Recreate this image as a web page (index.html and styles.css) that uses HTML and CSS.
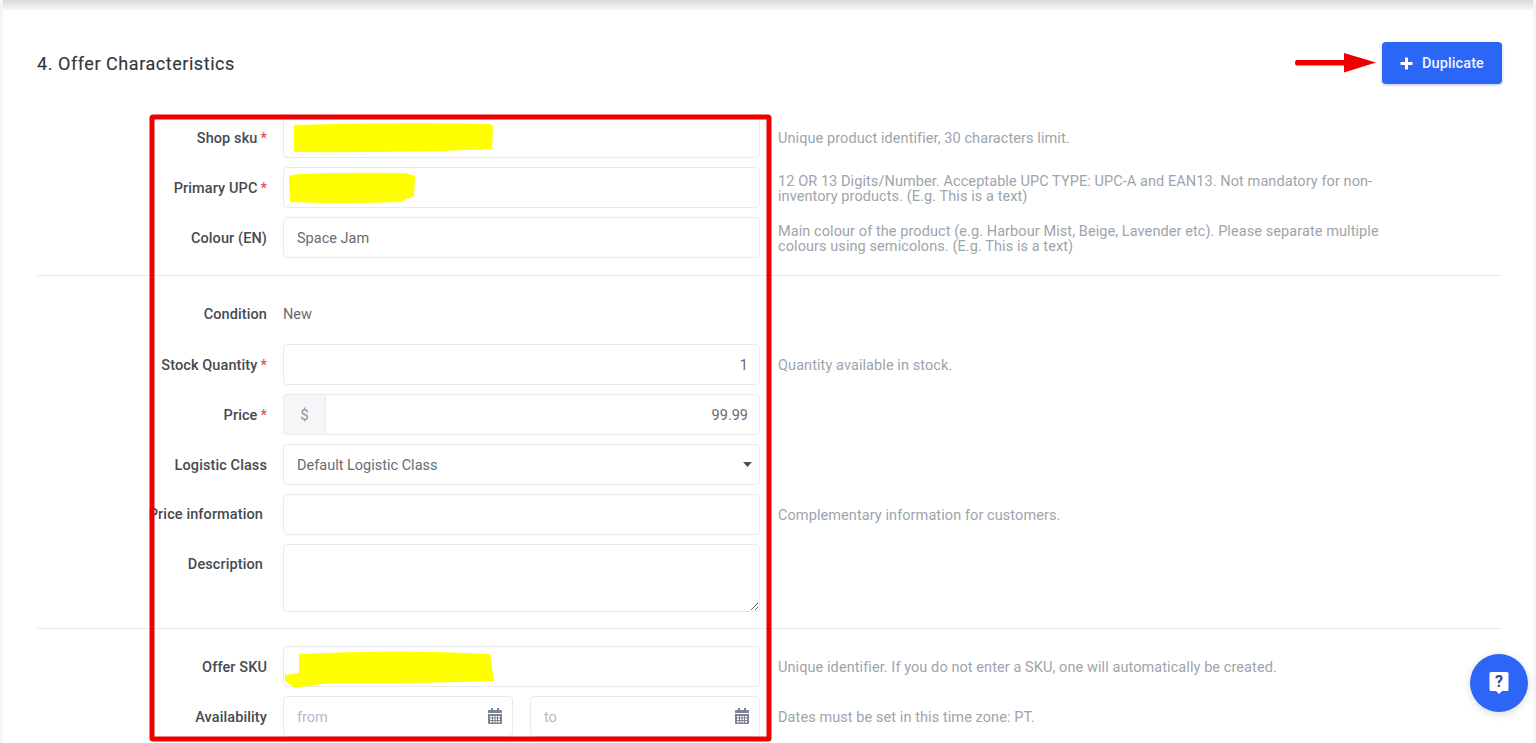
FILE: index.html
```html
<!DOCTYPE html>
<html lang="en">
<head>
<meta charset="utf-8">
<title>Offer Characteristics</title>
<link rel="stylesheet" href="styles.css">
</head>
<body>
<div class="topshade"></div>
<main class="card">
  <header class="head">
    <h2 class="title">4. Offer Characteristics</h2>
    <div class="actions">
      <svg class="arrow" width="83" height="24" viewBox="0 0 83 24"><path d="M2 9 H50 V2 L82 11.500 L50 21.500 V14.500 H2 Q0 12 2 9Z" fill="#ee0000"/></svg>
      <button class="btn" type="button"><svg width="13" height="13" viewBox="0 0 13 13"><path d="M5 0.5h3v4.500h4.500v3h-4.500v4.500h-3v-4.500h-4.500v-3h4.500z" fill="#fff"/></svg>Duplicate</button>
    </div>
  </header>

  <section class="sec first">
    <div class="row"><label class="lbl">Shop sku<i>*</i></label><input class="ctl" type="text"><p class="help">Unique product identifier, 30 characters limit.</p></div>
    <div class="row"><label class="lbl">Primary UPC<i>*</i></label><input class="ctl" type="text"><p class="help">12 OR 13 Digits/Number. Acceptable UPC TYPE: UPC-A and EAN13. Not mandatory for non-<br>inventory products. (E.g. This is a text)</p></div>
    <div class="row"><label class="lbl">Colour (EN)</label><input class="ctl" type="text" value="Space Jam"><p class="help">Main colour of the product (e.g. Harbour Mist, Beige, Lavender etc). Please separate multiple<br>colours using semicolons. (E.g. This is a text)</p></div>
  </section>

  <section class="sec mid">
    <div class="row"><label class="lbl plain">Condition</label><div class="static">New</div><p class="help"></p></div>
    <div class="row"><label class="lbl">Stock Quantity<i>*</i></label><input class="ctl num" type="text" value="1"><p class="help">Quantity available in stock.</p></div>
    <div class="row"><label class="lbl">Price<i>*</i></label><div class="group"><span class="addon">$</span><input class="ctl num" type="text" value="99.99"></div><p class="help"></p></div>
    <div class="row"><label class="lbl">Logistic Class</label><div class="selectwrap"><select class="ctl sel"><option>Default Logistic Class</option></select><svg class="caret" width="9" height="5" viewBox="0 0 10 6" preserveAspectRatio="none"><path d="M0 0h10L5 6z" fill="#4c5157"/></svg></div><p class="help"></p></div>
    <div class="row"><label class="lbl opt">Price information</label><input class="ctl" type="text"><p class="help">Complementary information for customers.</p></div>
    <div class="row tall"><label class="lbl opt">Description</label><textarea class="ctl area"></textarea><p class="help"></p></div>
  </section>

  <section class="sec last">
    <div class="row"><label class="lbl">Offer SKU</label><input class="ctl" type="text"><p class="help">Unique identifier. If you do not enter a SKU, one will automatically be created.</p></div>
    <div class="row"><label class="lbl">Availability</label>
      <div class="dates">
        <div class="date"><input class="ctl" type="text" placeholder="from"><svg class="cal" width="14" height="16" viewBox="0 0 14 16"><path d="M3 0h2v2h4V0h2v2h2a1 1 0 0 1 1 1v2H0V3a1 1 0 0 1 1-1h2zM0 6h14v9a1 1 0 0 1-1 1H1a1 1 0 0 1-1-1zm2 2v1.500h2V8zm3 0v1.500h1.500V8zm2.500 0v1.500H9V8zM10 8v1.500h2V8zm-8 2.500V12h2v-1.500zm3 0V12h1.500v-1.500zm2.500 0V12H9v-1.500zm2.500 0V12h2v-1.500zM2 13v1.500h2V13zm3 0v1.500h1.500V13zm2.500 0v1.500H9V13zm2.500 0v1.500h2V13z" fill="#7b8490" fill-rule="evenodd"/></svg></div>
        <div class="date"><input class="ctl" type="text" placeholder="to"><svg class="cal" width="14" height="16" viewBox="0 0 14 16"><path d="M3 0h2v2h4V0h2v2h2a1 1 0 0 1 1 1v2H0V3a1 1 0 0 1 1-1h2zM0 6h14v9a1 1 0 0 1-1 1H1a1 1 0 0 1-1-1zm2 2v1.500h2V8zm3 0v1.500h1.500V8zm2.500 0v1.500H9V8zM10 8v1.500h2V8zm-8 2.500V12h2v-1.500zm3 0V12h1.500v-1.500zm2.500 0V12H9v-1.500zm2.500 0V12h2v-1.500zM2 13v1.500h2V13zm3 0v1.500h1.500V13zm2.500 0v1.500H9V13zm2.500 0v1.500h2V13z" fill="#7b8490" fill-rule="evenodd"/></svg></div>
      </div>
      <p class="help">Dates must be set in this time zone: PT.</p></div>
  </section>
</main>

<svg class="marks" width="1536" height="743" viewBox="0 0 1536 743">
  <path d="M294 125 Q400 122 490 124 L493 126 L492 149 Q400 153 294 152 Z" fill="#ffff00"/>
  <path d="M289 176 Q296 172 405 173 L415 176 L414 196 L400 202 Q340 204 290 202 Z" fill="#ffff00"/>
  <path d="M299 654 Q400 649 490 654 L494 681 Q400 684 330 683 L295 688 L285 681 L285 675 L299 673 Z" fill="#ffff00"/>
  <rect class="redbox" x="152" y="117" width="617" height="622" rx="1"/>
</svg>

<button class="fab" type="button" aria-label="Help">
  <svg width="20" height="24" viewBox="0 0 20 24"><path d="M2 1h16a1.500 1.500 0 0 1 1.500 1.500v16a1.500 1.500 0 0 1-1.500 1.500h-5l-3 3-3-3H2a1.500 1.500 0 0 1-1.500-1.500v-16A1.500 1.500 0 0 1 2 1z" fill="#fff"/><text x="10" y="16" text-anchor="middle" class="q">?</text></svg>
</button>
</body>
</html>
```

FILE: styles.css
```css
* { box-sizing: border-box; }
html, body { height: 743px; overflow: hidden; }
body {
  margin: 0;
  background: #f6f6f6;
  font-family: "Roboto", "Liberation Sans", sans-serif;
  color: #3a3f45;
  padding: 0 3px;
}
.topshade {
  height: 10px;
  background: linear-gradient(#dadada, #eeeeee 70%, #f6f6f6);
}
.card {
  background: #fff;
  height: 733px;
  padding: 32px 31px 0 34px;
  overflow: hidden;
}
.head {
  display: flex;
  justify-content: space-between;
  align-items: center;
  height: 42px;
  margin-bottom: 33px;
}
.title {
  margin: 0;
  font-size: 18px;
  font-weight: 400;
  color: #32373d;
  letter-spacing: 0.55px;
  -webkit-text-stroke: 0.15px #32373d;
}
.actions { display: flex; align-items: center; }
.arrow { display: block; margin-right: 5px; }
.btn {
  width: 120px;
  height: 42px;
  display: flex;
  align-items: center;
  justify-content: center;
  gap: 9px;
  border: 0;
  border-radius: 4px;
  background: #2b66f6;
  color: #eef3ff;
  font: 500 14.500px "Roboto", sans-serif;
  letter-spacing: 0.1px;
  box-shadow: 0 1px 3px rgba(40, 80, 180, .35);
}
.sec { padding: 18px 0 8px; border-top: 1px solid #e8e9ec; }
.sec.first { padding-top: 0; border-top: 0; }
.sec.mid { padding-bottom: 7px; }
.sec.last { padding-top: 17px; }
.row {
  display: grid;
  grid-template-columns: 230px 477px 640px;
  column-gap: 16px;
  height: 41px;
  margin-bottom: 9px;
  align-items: center;
}
.row.tall { height: 68px; align-items: start; }
.row.tall .lbl { padding-top: 12px; }
.lbl {
  text-align: right;
  font-size: 14.500px;
  font-weight: 500;
  letter-spacing: 0.1px;
  color: #464b51;
  white-space: nowrap;
  position: relative;
  top: 1px;
}
.lbl i {
  font-style: normal;
  color: #d9534f;
  margin-left: 3px;
}
.lbl.opt { padding-right: 4px; top: 0; }
.lbl.plain { top: 0; }
.ctl {
  width: 100%;
  height: 41px;
  border: 1px solid #e8eaee;
  border-radius: 4px;
  background: #fff;
  padding: 2px 13px 0;
  font: 400 14.500px "Roboto", sans-serif;
  color: #666c73;
  outline: none;
}
.ctl::placeholder { color: #b6bbc1; opacity: 1; }
.num { text-align: right; padding-right: 11px; }
.static { font-size: 14.500px; color: #666c73; }
.group { display: flex; }
.addon {
  flex: none;
  width: 42px;
  height: 41px;
  display: flex;
  align-items: center;
  justify-content: center;
  background: #f5f6f7;
  border: 1px solid #e8eaee;
  border-right: 0;
  border-radius: 4px 0 0 4px;
  color: #8d939a;
  font-size: 15px;
}
.group .ctl { border-radius: 0 4px 4px 0; }
.selectwrap, .date { position: relative; }
.sel { appearance: none; -webkit-appearance: none; display: block; }
.caret { position: absolute; right: 8px; top: 18px; }
.area { height: 68px; display: block; resize: vertical; padding-top: 10px; }
.dates { display: grid; grid-template-columns: 230px 230px; column-gap: 17px; }
.cal { position: absolute; right: 11px; top: 12px; }
.help {
  margin: 0 0 0 2px;
  font-size: 14.500px;
  line-height: 15px;
  letter-spacing: 0.08px;
  color: #9ea4ab;
  white-space: nowrap;
  position: relative;
  top: 1px;
}
.marks { position: absolute; left: 0; top: 0; pointer-events: none; }
.redbox { fill: none; stroke: #ee0000; stroke-width: 5; }
.fab {
  position: absolute;
  left: 1470px;
  top: 654px;
  width: 58px;
  height: 58px;
  border-radius: 50%;
  border: 0;
  padding: 0;
  display: flex;
  align-items: center;
  justify-content: center;
  background: #2b66f6;
  box-shadow: 0 2px 8px rgba(0, 0, 0, .15);
}
.q { font: 700 16px "Roboto", sans-serif; fill: #2b4a9a; }
```
